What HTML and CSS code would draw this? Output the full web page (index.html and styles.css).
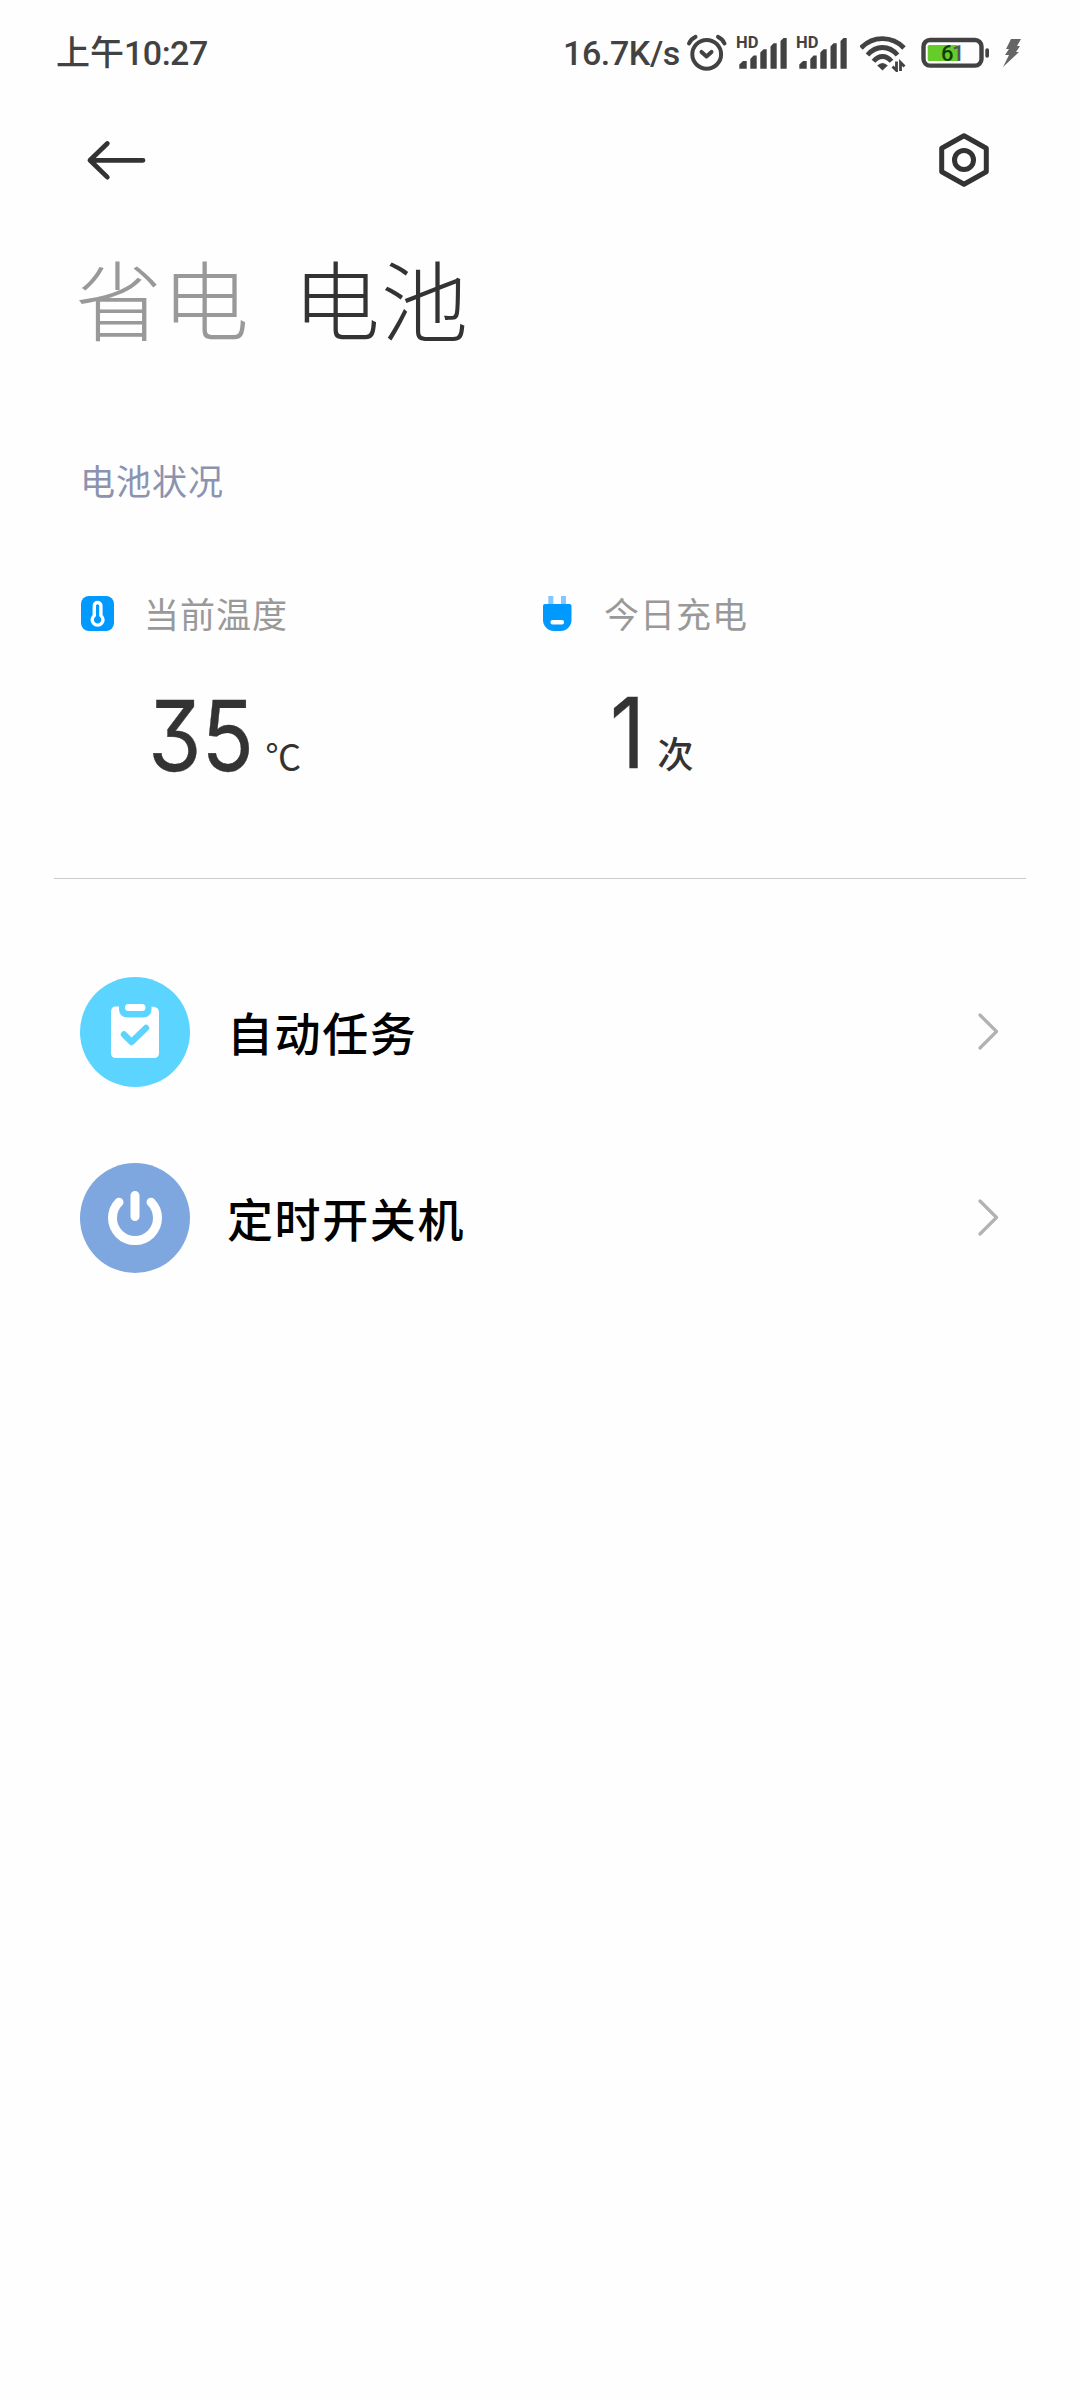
FILE: index.html
```html
<!DOCTYPE html>
<html lang="zh-CN">
<head>
  <meta charset="UTF-8" />
  <meta name="viewport" content="width=device-width, initial-scale=1.0" />
  <title>电池</title>
  <link rel="stylesheet" href="styles.css">
</head>
<body>
  <div class="status-bar">
    <span class="clock">上午<span class="latin">10:27</span></span>
    <div class="status-icons">
      <span class="speed">16.7K/s</span>
      <svg class="alarm" width="42" height="40" viewBox="0 0 42 40">
        <g fill="none" stroke="#424242" stroke-width="4" stroke-linecap="round" stroke-linejoin="round">
          <circle cx="20.7" cy="21.3" r="14.4" />
          <path d="M15.5 18.9l5 4.5 5-4.5" />
          <path d="M3 10.5Q5 6 9.5 3.9M32 3.9Q36.500 6 38.500 10.500" />
        </g>
      </svg>
      <svg class="signal" width="52" height="44" viewBox="0 -4 52 44">
        <text x="0" y="13" class="hd">HD</text>
        <path d="M3.300 33.700V29.500L7 26H10.700V33.700zM14.300 33.700V24L17.500 20.500H20.700V33.700zM24.300 33.700V17.500L27.500 14.300H30.700V33.700zM34.500 33.700V11.500L37.500 8.200H40.700V33.700zM44.500 33.700V6L47.500 3H50.700V33.700z" />
      </svg>
      <svg class="signal second" width="52" height="44" viewBox="0 -4 52 44">
        <text x="0" y="13" class="hd">HD</text>
        <path d="M3.300 33.700V29.500L7 26H10.700V33.700zM14.300 33.700V24L17.500 20.500H20.700V33.700zM24.300 33.700V17.500L27.500 14.300H30.700V33.700zM34.500 33.700V11.500L37.500 8.200H40.700V33.700zM44.500 33.700V6L47.500 3H50.700V33.700z" />
      </svg>
      <svg class="wifi" width="48" height="38" viewBox="0 0 48 38">
        <g fill="none" stroke="#424242" stroke-width="4.800">
          <path d="M1 14Q10 4.700 22.500 4.700T44 14" />
          <path d="M7.500 21Q14 13.500 22.500 13.500T37.500 21" />
          <path d="M13.500 27.300Q17.500 22.500 22.500 22.500T31.500 27.300" />
        </g>
        <path fill="#424242" d="M17.200 31.500Q22.500 26.500 27.800 31.500L22.500 36.500z" />
        <path fill="none" stroke="#424242" stroke-width="2.800" d="M36.500 27.500V36.500L32.500 32.500M40.500 37V28.500L44.500 32.500" />
      </svg>
      <svg class="battery" width="70" height="32" viewBox="0 0 70 32">
        <rect x="2.500" y="3" width="58" height="25.600" rx="6.500" fill="none" stroke="#424242" stroke-width="4.400" />
        <rect x="6.700" y="8" width="30.500" height="16" rx="1.500" fill="#66cc2a" />
        <rect x="64.300" y="11.300" width="3.700" height="9.500" rx="1.800" fill="#424242" />
        <text x="20" y="24" class="level">6<tspan x="31" fill="#555">1</tspan></text>
      </svg>
      <svg class="bolt" width="18" height="30" viewBox="0 0 18 30">
        <path fill="#666" d="M8 1h10l-4 7h3l-4 6h3L0 29l6-12H2l4-6H3z" />
      </svg>
    </div>
  </div>

  <div class="header">
    <svg width="60" height="42" viewBox="0 0 60 42">
      <path d="M57 21.300H4M21.300 4.500L4 21.300l17.300 16.800" fill="none" stroke="#333" stroke-width="4.800" stroke-linecap="round" stroke-linejoin="round" />
    </svg>
    <svg width="50" height="54" viewBox="0 0 50 54">
      <g fill="none" stroke="#333" stroke-width="5" stroke-linejoin="round">
        <path d="M25 2.700L47.300 15.200V38.800L25 51.300L2.700 38.800V15.200z" />
        <circle cx="25" cy="27" r="9.500" />
      </g>
    </svg>
  </div>

  <div class="tabs">
    <span class="tab">省电</span>
    <span class="tab active">电池</span>
  </div>

  <div class="section-title">电池状况</div>

  <div class="stats">
    <div class="stat">
      <div class="stat-label">
        <svg width="33" height="35" viewBox="0 0 33 35">
          <rect width="33" height="35" rx="8" fill="#0099ff" />
          <path d="M13.300 19.500V9.800a3.300 3.300 0 0 1 6.600 0v9.700a5.400 5.400 0 1 1-6.600 0z" fill="none" stroke="#fff" stroke-width="3.400" />
        </svg>
        <span>当前温度</span>
      </div>
      <div class="stat-value"><span class="number">35</span><span class="unit degree">℃</span></div>
    </div>
    <div class="stat">
      <div class="stat-label">
        <svg width="33" height="35" viewBox="0 0 33 35">
          <path d="M7.300 0h5v9h-5zM20 0h5v9h-5z" fill="#80c8ff" />
          <path d="M4 8H28.500a2 2 0 0 1 2 2V24a11 11 0 0 1-11 11H13a11 11 0 0 1-11-11V10a2 2 0 0 1 2-2z" fill="#0099ff" />
          <rect x="9.500" y="24" width="13.500" height="4.400" rx="2" fill="#fff" />
        </svg>
        <span>今日充电</span>
      </div>
      <div class="stat-value one"><span class="number">1</span><span class="unit">次</span></div>
    </div>
  </div>

  <div class="list">
    <div class="item">
      <svg width="110" height="110" viewBox="0 0 110 110">
        <circle cx="55" cy="55" r="55" fill="#5bd4ff" />
        <path d="M35 29.500H39V32.500A8 8 0 0 0 47 40.500H63.500A8 8 0 0 0 71.500 32.500V29.500Q79 29.500 79 35.500V76Q79 81 74 81H36Q31 81 31 76V35.500Q31 29.500 35 29.500z" fill="#fff" />
        <rect x="45" y="27" width="20.500" height="7" rx="3.500" fill="#fff" />
        <path d="M44 57.500l7.500 7.500L66 51" fill="none" stroke="#5bd4ff" stroke-width="6.400" stroke-linecap="round" stroke-linejoin="round" />
      </svg>
      <span class="name">自动任务</span>
      <svg width="22" height="38" viewBox="0 0 22 38">
        <path d="M3 2L19.500 18.500L3 35" fill="none" stroke="#b2b2b2" stroke-width="3.200" stroke-linecap="round" stroke-linejoin="round" />
      </svg>
    </div>
    <div class="item">
      <svg width="110" height="110" viewBox="0 0 110 110">
        <circle cx="55" cy="55" r="55" fill="#7ea6df" />
        <path d="M55 32.500V53.500M39 39.200A22.500 22.500 0 1 0 71 39.200" fill="none" stroke="#fff" stroke-width="9" stroke-linecap="round" />
      </svg>
      <span class="name">定时开关机</span>
      <svg width="22" height="38" viewBox="0 0 22 38">
        <path d="M3 2L19.500 18.500L3 35" fill="none" stroke="#b2b2b2" stroke-width="3.200" stroke-linecap="round" stroke-linejoin="round" />
      </svg>
    </div>
  </div>
</body>
</html>
```
FILE: styles.css
```css
* {
  box-sizing: border-box;
}
body {
  margin: 0;
  width: 1080px;
  height: 2400px;
  background: #fefefe;
  color: #333;
  font-family: Roboto, "Noto Sans CJK SC", sans-serif;
}
svg {
  display: block;
  flex-shrink: 0;
}
.status-bar {
  height: 106px;
  padding: 0 59px 0 56px;
  display: flex;
  align-items: center;
  justify-content: space-between;
  color: #424242;
}
.clock {
  padding-bottom: 5px;
  font-size: 34px;
  font-weight: 500;
  white-space: nowrap;
}
.latin {
  letter-spacing: -0.5px;
}
.speed {
  font-size: 34px;
  font-weight: 500;
  letter-spacing: -0.4px;
  width: 123px;
}
.status-icons {
  display: flex;
  align-items: center;
}
.signal {
  margin-left: 8px;
  fill: #424242;
}
.hd {
  font-size: 16.5px;
  font-weight: 700;
}
.wifi {
  margin-left: 12px;
}
.battery {
  margin-left: 13px;
}
.level {
  font-size: 22px;
  font-weight: 500;
  fill: #143d05;
}
.bolt {
  margin-left: 12px;
}
.header {
  height: 108px;
  padding: 0 91px 0 86px;
  display: flex;
  align-items: center;
  justify-content: space-between;
}
.tabs {
  height: 174px;
  padding: 8px 0 0 75px;
  display: flex;
  align-items: center;
  gap: 44px;
  font-size: 87px;
  font-weight: 300;
  line-height: 1;
}
.tab {
  color: #999;
}
.tab.active {
  color: #333;
  letter-spacing: 1px;
}
.section-title {
  height: 186px;
  padding: 0 0 4px 80px;
  display: flex;
  align-items: center;
  font-size: 35px;
  letter-spacing: 1px;
  color: #8c93b0;
}
.stats {
  height: 305px;
  margin: 0 54px;
  padding-left: 27px;
  display: flex;
  border-bottom: 1px solid #ccc;
}
.stat {
  width: 460px;
}
.stat-label {
  height: 79px;
  display: flex;
  align-items: center;
  gap: 30px;
  font-size: 35px;
  letter-spacing: 1px;
  color: #999;
}
.stat-label span {
  padding-bottom: 3px;
}
.stat-value {
  padding: 18px 0 0 67px;
  display: flex;
  align-items: baseline;
}
.stat-value.one {
  padding: 15px 0 0 69px;
}
.number {
  font-family: Inter, sans-serif;
  font-feature-settings: "cv09";
  font-size: 97px;
  font-weight: 400;
  line-height: 130px;
  transform: scaleX(0.89);
  transform-origin: left;
  -webkit-text-stroke: 0.4px #333;
}
.unit {
  margin-left: -2px;
  font-size: 36px;
  font-weight: 500;
}
.unit.degree {
  font-weight: 400;
}
.one .unit {
  margin-left: 8px;
}
.list {
  padding: 60px 81px 0 80px;
}
.item {
  height: 186px;
  display: flex;
  align-items: center;
}
.name {
  flex: 1;
  margin-left: 37px;
  padding-bottom: 3px;
  font-size: 46px;
  font-weight: 500;
  letter-spacing: 1.600px;
  color: #000;
}
```
